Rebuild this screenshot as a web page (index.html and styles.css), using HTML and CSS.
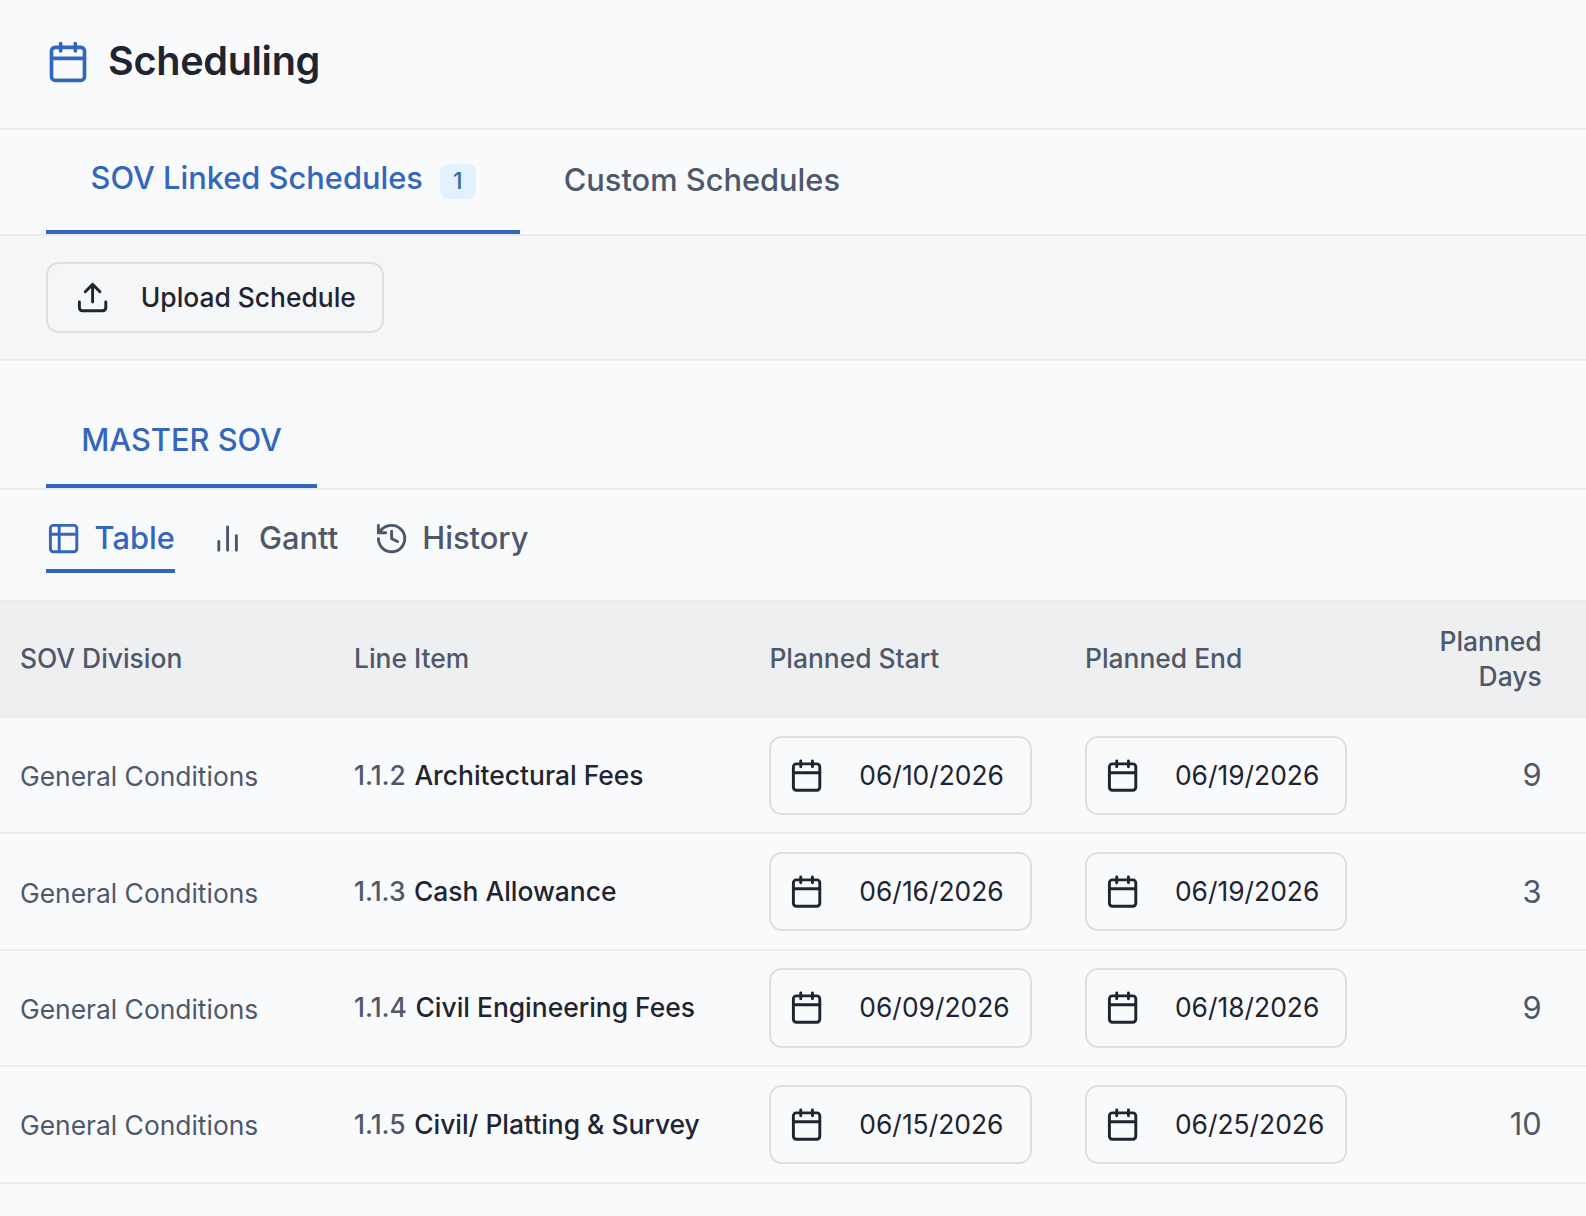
FILE: index.html
```html
<!DOCTYPE html>
<html lang="en">
<head>
<meta charset="utf-8">
<title>Scheduling</title>
<link rel="stylesheet" href="styles.css">
</head>
<body>
<svg class="sprite" aria-hidden="true">
  <symbol id="calendar" viewBox="0 0 24 24"><path d="M8 2v4M16 2v4M3 10h18"/><rect x="3" y="4" width="18" height="18" rx="2"/></symbol>
  <symbol id="upload" viewBox="0 0 24 24"><path d="M21 15v4a2 2 0 0 1-2 2H5a2 2 0 0 1-2-2v-4M17 8l-5-5-5 5M12 3v12"/></symbol>
  <symbol id="table" viewBox="0 0 24 24"><rect x="3" y="3" width="18" height="18" rx="2"/><path d="M9 3v18M3 9h18"/></symbol>
  <symbol id="bars" viewBox="0 0 24 24"><path d="M6 20v-6M12 20V4M18 20V10"/></symbol>
  <symbol id="history" viewBox="0 0 24 24"><path d="M3 12a9 9 0 1 0 9-9 9.75 9.75 0 0 0-6.74 2.74L3 8M3 3v5h5M12 7v5l4 2"/></symbol>
</svg>

<header class="page-header">
  <svg class="icon icon-lg"><use href="#calendar"/></svg>
  <h1 class="title">Scheduling</h1>
</header>

<nav class="tabs">
  <a class="tab tab-active"><span class="tab-label">SOV Linked Schedules</span><span class="badge">1</span></a>
  <a class="tab">Custom Schedules</a>
</nav>

<div class="toolbar">
  <button class="upload"><svg class="icon"><use href="#upload"/></svg>Upload Schedule</button>
</div>

<nav class="sov-tabs"><a class="sov-tab">MASTER SOV</a></nav>

<nav class="views">
  <a class="view view-active"><svg class="icon"><use href="#table"/></svg>Table</a>
  <a class="view"><svg class="icon"><use href="#bars"/></svg>Gantt</a>
  <a class="view"><svg class="icon"><use href="#history"/></svg>History</a>
</nav>

<main class="grid">
  <div class="row head">
    <div class="col">SOV Division</div><div class="col">Line Item</div><div class="col">Planned Start</div><div class="col">Planned End</div><div class="days-head">Planned<br>Days</div>
  </div>
  <div class="row">
    <div class="division">General Conditions</div>
    <div class="item"><span class="code">1.1.2</span> Architectural Fees</div>
    <div class="date"><svg class="icon"><use href="#calendar"/></svg>06/10/2026</div>
    <div class="date"><svg class="icon"><use href="#calendar"/></svg>06/19/2026</div>
    <div class="days">9</div>
  </div>
  <div class="row">
    <div class="division">General Conditions</div>
    <div class="item"><span class="code">1.1.3</span> Cash Allowance</div>
    <div class="date"><svg class="icon"><use href="#calendar"/></svg>06/16/2026</div>
    <div class="date"><svg class="icon"><use href="#calendar"/></svg>06/19/2026</div>
    <div class="days">3</div>
  </div>
  <div class="row">
    <div class="division">General Conditions</div>
    <div class="item"><span class="code">1.1.4</span> Civil Engineering Fees</div>
    <div class="date"><svg class="icon"><use href="#calendar"/></svg>06/09/2026</div>
    <div class="date"><svg class="icon"><use href="#calendar"/></svg>06/18/2026</div>
    <div class="days">9</div>
  </div>
  <div class="row">
    <div class="division">General Conditions</div>
    <div class="item"><span class="code">1.1.5</span> Civil/ Platting &amp; Survey</div>
    <div class="date"><svg class="icon"><use href="#calendar"/></svg>06/15/2026</div>
    <div class="date"><svg class="icon"><use href="#calendar"/></svg>06/25/2026</div>
    <div class="days">10</div>
  </div>
</main>
</body>
</html>
```
FILE: styles.css
```css
:root {
  --bg: #f9fafc;
  --line: #ebecee;
  --outline: #dddfe1;
  --blue: #3367bd;
  --ink: #1f2530;
  --muted: #4e586a;
}
* { box-sizing: border-box; }
body {
  margin: 0;
  height: 1216px;
  overflow: hidden;
  background: var(--bg);
  color: var(--ink);
  font-family: Inter, "Liberation Sans", sans-serif;
  font-size: 26.4px;
}
.sprite { display: none; }
.icon {
  flex: none;
  width: 35.2px;
  height: 35.2px;
  fill: none;
  stroke: currentColor;
  stroke-width: 2;
  stroke-linecap: round;
  stroke-linejoin: round;
}
.icon-lg { width: 44px; height: 44px; color: var(--blue); }
.page-header {
  display: flex;
  align-items: center;
  gap: 18px;
  height: 130px;
  padding: 0 46px 4px;
  border-bottom: 2px solid var(--line);
}
.title {
  margin: 0;
  padding-bottom: 2px;
  font-size: 39.6px;
  font-weight: 600;
  line-height: 48px;
  letter-spacing: -0.3px;
}
.tabs {
  display: flex;
  height: 106px;
  padding: 0 46px;
  border-bottom: 2px solid var(--line);
}
.tab {
  display: flex;
  align-items: center;
  padding: 0 44px 6px;
  color: var(--muted);
  font-size: 30.8px;
  font-weight: 500;
}
.tab-active { border-bottom: 4px solid var(--blue); padding: 0 44px 0 44.6px; color: var(--blue); }
.tab-label { padding-bottom: 5px; }
.badge {
  width: 36px;
  height: 35px;
  margin-left: 16.8px;
  margin-top: 3px;
  border-radius: 8px;
  background: #e2f1fd;
  color: #2e6a9f;
  font-size: 22.9px;
  line-height: 35px;
  text-align: center;
}
.toolbar {
  display: flex;
  align-items: center;
  height: 125px;
  padding: 0 46px;
  border-bottom: 2px solid var(--line);
  background: #f5f6f8;
}
.upload {
  display: flex;
  align-items: center;
  gap: 31px;
  width: 338px;
  height: 71px;
  padding: 0 0 1px 26.6px;
  border: 2px solid var(--outline);
  border-radius: 13px;
  background: transparent;
  color: inherit;
  font: inherit;
  font-weight: 500;
  white-space: nowrap;
}
.upload .icon, .date .icon { margin-top: 1px; }
.sov-tabs {
  display: flex;
  height: 129px;
  padding: 32px 46px 0;
  border-bottom: 2px solid var(--line);
}
.sov-tab {
  display: flex;
  align-items: center;
  padding: 2px 35.2px 0;
  border-bottom: 4px solid var(--blue);
  color: var(--blue);
  font-size: 30.8px;
  font-weight: 500;
}
.views {
  display: flex;
  gap: 35.6px;
  height: 110px;
  padding: 13px 46px 27px;
}
.view {
  display: flex;
  align-items: center;
  gap: 13.4px;
  padding-top: 3px;
  border-bottom: 4px solid transparent;
  color: var(--muted);
  font-size: 30.8px;
  font-weight: 500;
}
.view .icon { margin-top: 2px; }
.view-active { border-color: var(--blue); color: var(--blue); }
.row {
  display: grid;
  grid-template-columns: 334px 415.4px 315.6px 262px 1fr;
  align-items: center;
  height: 116.4px;
  padding: 0 44.4px 0 20px;
  border-bottom: 2px solid var(--line);
}
.head {
  height: 118px;
  border-top: 2px solid var(--line);
  background: #eeeff1;
  color: var(--muted);
  font-weight: 500;
  line-height: 35px;
}
.col { padding-bottom: 1.4px; }
.days-head, .days { text-align: right; }
.division { padding-top: 2px; color: var(--muted); }
.item { padding-bottom: 1.1px; font-weight: 500; }
.code { margin-right: 1.5px; color: var(--muted); }
.date {
  display: flex;
  align-items: center;
  gap: 35.2px;
  width: 262.4px;
  height: 79.2px;
  padding: 0 0 1.1px 17.6px;
  border: 2px solid var(--outline);
  border-radius: 13px;
  white-space: nowrap;
}
.days { padding-bottom: 1px; color: var(--muted); font-size: 30.8px; }
```
